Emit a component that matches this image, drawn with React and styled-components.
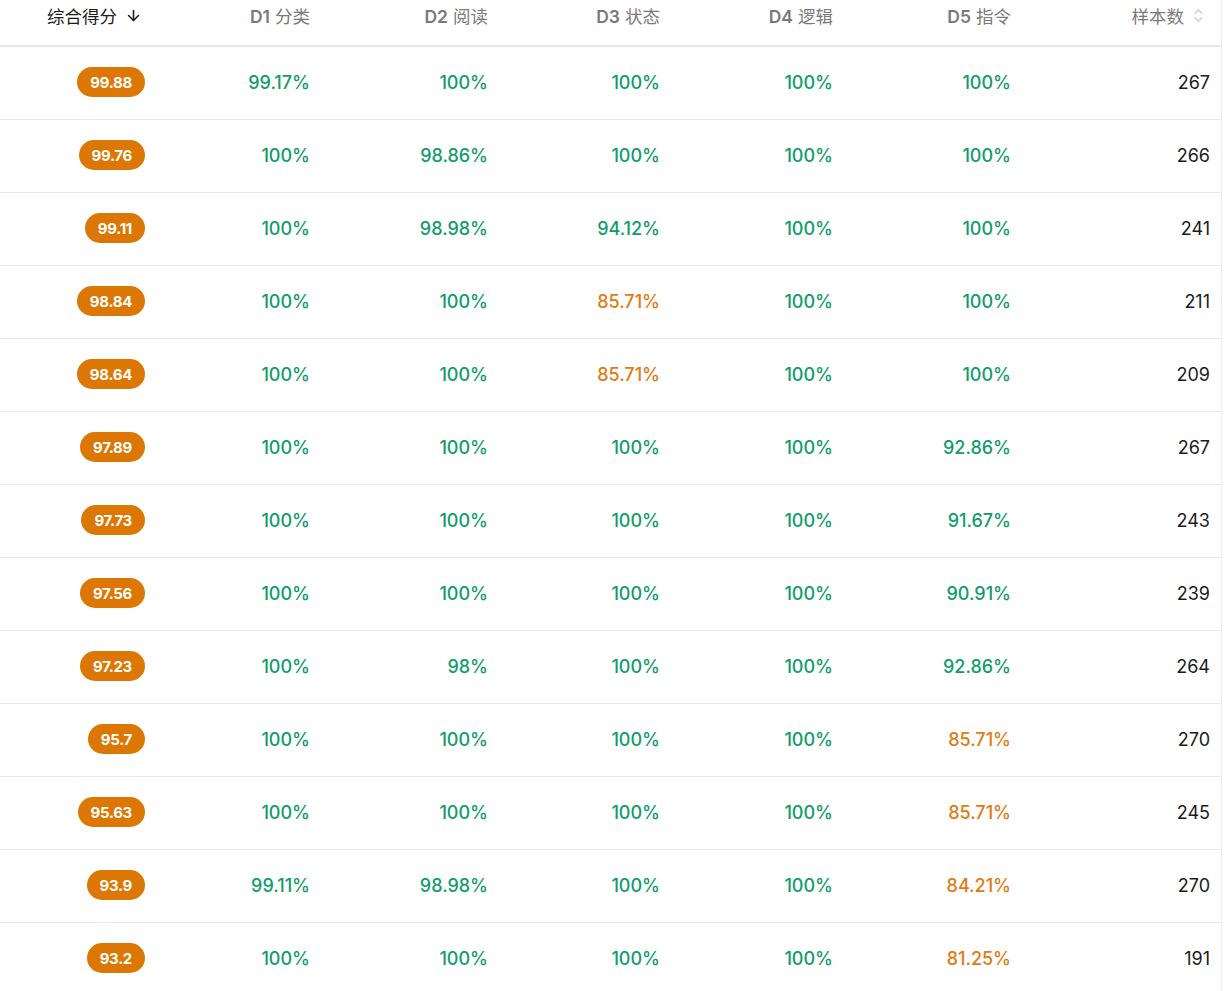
import React from "react";
import styled, { createGlobalStyle } from "styled-components";
import { ArrowDown, ChevronsUpDown } from "lucide-react";

const GREEN = "#119c6b";
const ORANGE = "#e07b12";

const columns = [
  { key: "score", code: null, label: "综合得分", width: 157 },
  { key: "d1", code: "D1", label: "分类", width: 165 },
  { key: "d2", code: "D2", label: "阅读", width: 178 },
  { key: "d3", code: "D3", label: "状态", width: 172 },
  { key: "d4", code: "D4", label: "逻辑", width: 173 },
  { key: "d5", code: "D5", label: "指令", width: 178 },
  { key: "n", code: null, label: "样本数", width: 199 },
];

const rows = [
  ["99.88", "99.17", "100", "100", "100", "100", 267],
  ["99.76", "100", "98.86", "100", "100", "100", 266],
  ["99.11", "100", "98.98", "94.12", "100", "100", 241],
  ["98.84", "100", "100", "85.71", "100", "100", 211],
  ["98.64", "100", "100", "85.71", "100", "100", 209],
  ["97.89", "100", "100", "100", "100", "92.86", 267],
  ["97.73", "100", "100", "100", "100", "91.67", 243],
  ["97.56", "100", "100", "100", "100", "90.91", 239],
  ["97.23", "100", "98", "100", "100", "92.86", 264],
  ["95.7", "100", "100", "100", "100", "85.71", 270],
  ["95.63", "100", "100", "100", "100", "85.71", 245],
  ["93.9", "99.11", "98.98", "100", "100", "84.21", 270],
  ["93.2", "100", "100", "100", "100", "81.25", 191],
];

const GlobalStyle = createGlobalStyle`
  body {
    margin: 0;
    background: #fff;
    font-family: Inter, "Noto Sans CJK SC", sans-serif;
    overflow: hidden;
  }
`;

const Table = styled.div`
  width: 1222px;
  border-right: 1px solid #f0f0f0;
  box-sizing: border-box;
`;

const Row = styled.div`
  display: grid;
  grid-template-columns: ${columns.map((c) => c.width + "px").join(" ")};
  height: ${(p) => (p.$head ? "45px" : "72px")};
  border-bottom: ${(p) => (p.$head ? "2px solid #e6e6e6" : "1px solid #e8e8e8")};
  align-items: center;
`;

const HeadCell = styled.div`
  display: flex;
  justify-content: flex-end;
  align-items: center;
  gap: ${(p) => (p.$icon === "sort" ? "8px" : "6px")};
  padding-right: ${(p) => (p.$icon ? "15px" : "12px")};
  font-size: 17.5px;
  color: ${(p) => (p.$active ? "#1b1b1b" : "#7a7a7a")};
  margin-top: -15px;
`;

const Code = styled.span`
  font-weight: 600;
  margin-right: 5px;
`;

const Cell = styled.div`
  display: flex;
  justify-content: flex-end;
  padding-right: 12px;
  padding-bottom: 2px;
  font-size: 18px;
  font-weight: 500;
  color: ${(p) => p.$color || "#1b1b1b"};
  ${(p) => p.$plain && "font-weight: 400;"}
`;

const Badge = styled.span`
  display: inline-flex;
  align-items: center;
  height: 30px;
  padding: 0 13px;
  border-radius: 15px;
  background: #dc7703;
  color: #fff;
  font-size: 15px;
  font-weight: 700;
  letter-spacing: -0.3px;
`;

const pctColor = (v) => (parseFloat(v) >= 90 ? GREEN : ORANGE);

export default function App() {
  return (
    <>
      <GlobalStyle />
      <Table>
        <Row $head>
          {columns.map((c) => (
            <HeadCell
              key={c.key}
              $active={c.key === "score"}
              $icon={c.key === "score" ? "sort" : c.key === "n" ? "chev" : null}
            >
              <span>
                {c.code && <Code>{c.code}</Code>}
                {c.label}
              </span>
              {c.key === "score" && <ArrowDown size={17} strokeWidth={2.2} color="#1b1b1b" />}
              {c.key === "n" && <ChevronsUpDown size={17} strokeWidth={1.6} color="#c4c4c4" />}
            </HeadCell>
          ))}
        </Row>
        {rows.map((r, i) => (
          <Row key={i}>
            <Cell>
              <Badge>{r[0]}</Badge>
            </Cell>
            {r.slice(1, 6).map((v, j) => (
              <Cell key={j} $color={pctColor(v)}>
                {v}%
              </Cell>
            ))}
            <Cell $plain>{r[6]}</Cell>
          </Row>
        ))}
      </Table>
    </>
  );
}
